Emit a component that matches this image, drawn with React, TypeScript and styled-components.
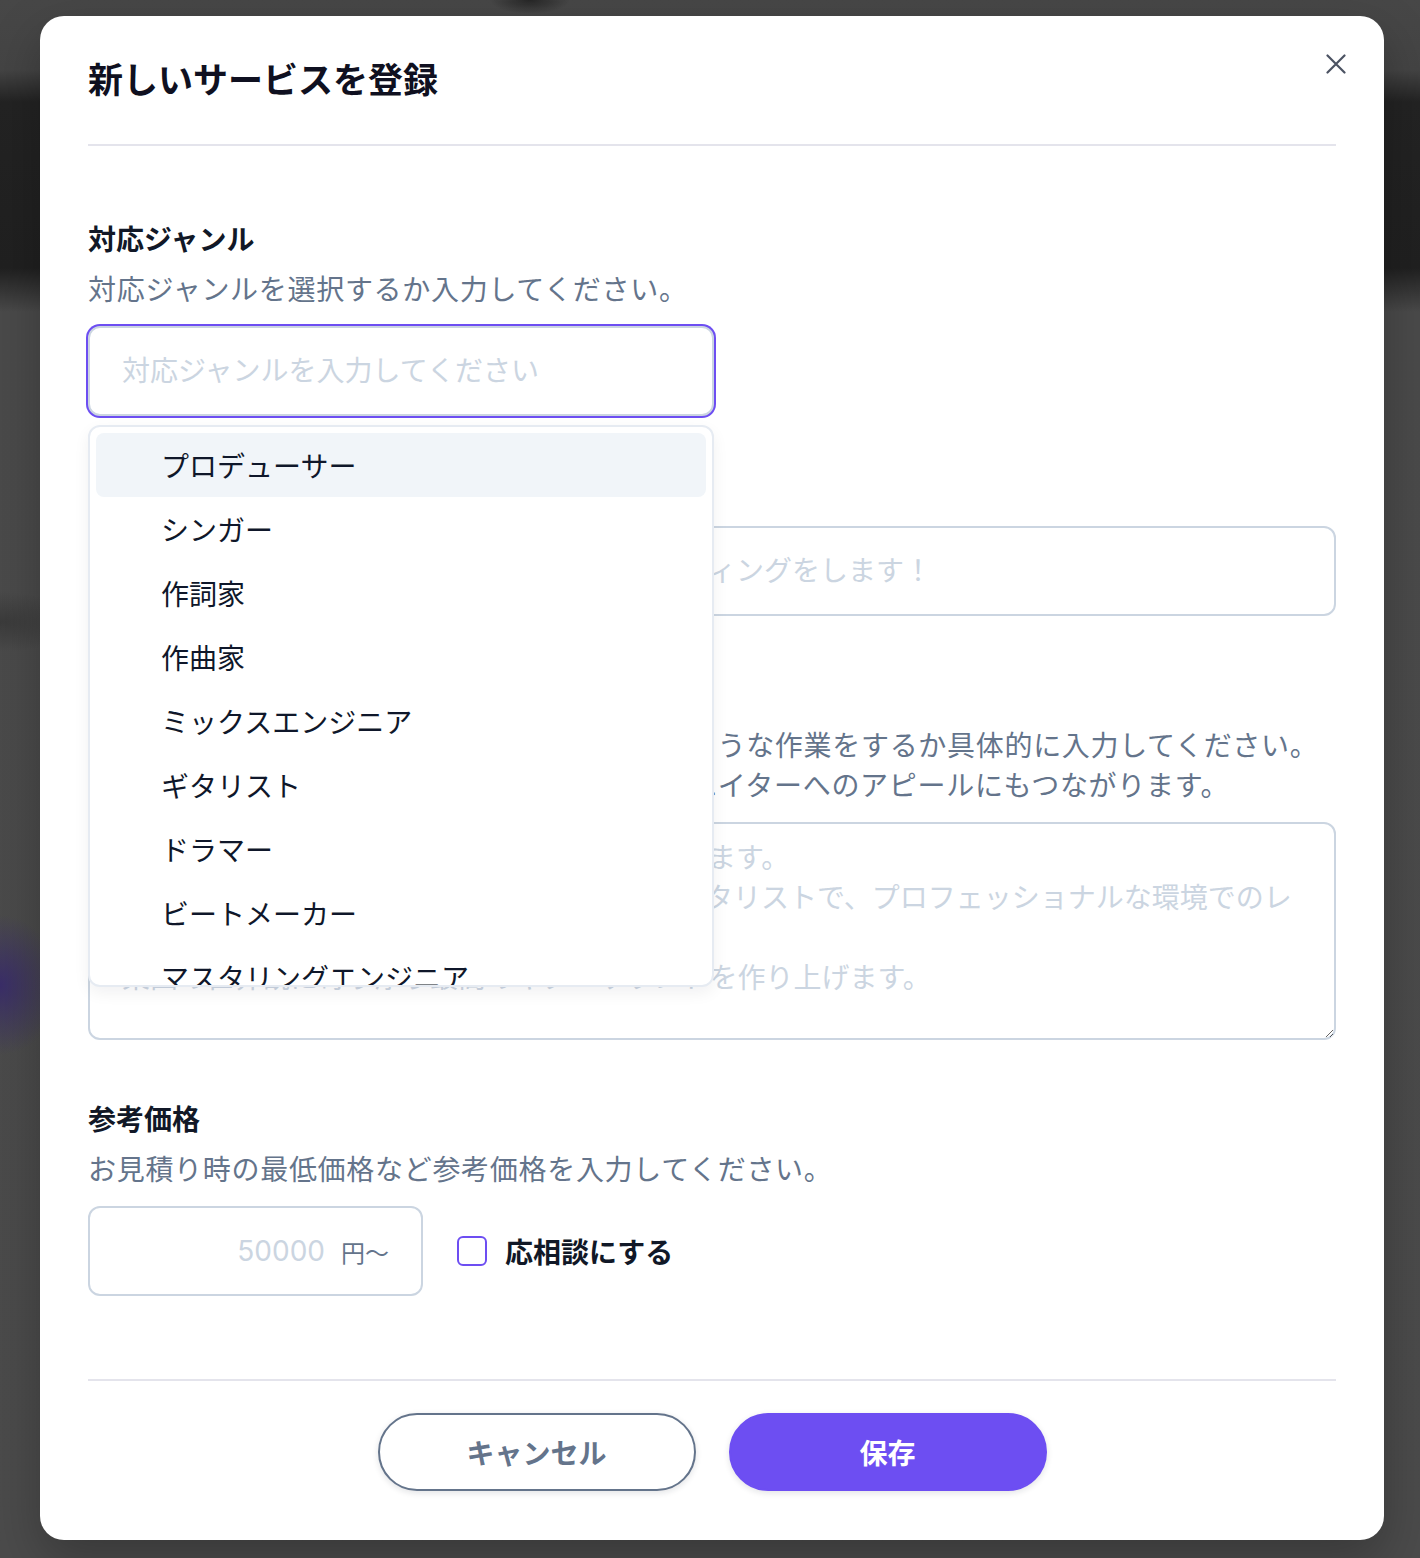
import React from 'react';
import styled, { createGlobalStyle } from 'styled-components';

const fontStack = `Inter, "Noto Sans CJK JP", "Noto Sans", sans-serif`;
const accent = '#6d4ef2';
const slate = '#64748b';
const lineColor = '#cbd5e1';
const ink = '#111827';

const genres = [
  'プロデューサー',
  'シンガー',
  '作詞家',
  '作曲家',
  'ミックスエンジニア',
  'ギタリスト',
  'ドラマー',
  'ビートメーカー',
  'マスタリングエンジニア',
  'ベーシスト',
  'キーボーディスト',
];

const detailPlaceholder =
  'エレキギターのレコーディングと編曲を担当します。\n' +
  '数多くのアーティストの作品に参加してきたギタリストで、プロフェッショナルな環境でのレ\n' +
  'コーディングが可能です。\n' +
  '楽曲の世界観に寄り添う最高のギターサウンドを作り上げます。';

const GlobalStyle = createGlobalStyle`
  * {
    box-sizing: border-box;
  }

  body {
    margin: 0;
    font-family: ${fontStack};
    -webkit-font-smoothing: antialiased;
  }
`;

const Backdrop = styled.div`
  min-height: 1558px;
  padding: 16px 36px 18px 40px;
  background:
    radial-gradient(60px 70px at 0px 985px, rgba(56, 42, 108, 0.9), rgba(56, 42, 108, 0)),
    radial-gradient(80px 30px at 0px 622px, rgba(52, 52, 52, 0.7), rgba(52, 52, 52, 0)),
    radial-gradient(40px 14px at 530px 0px, rgba(30, 30, 30, 0.8), rgba(30, 30, 30, 0)),
    linear-gradient(
      180deg,
      #474747 0px,
      #444444 70px,
      #232323 102px,
      #202020 268px,
      #4a4a4a 312px,
      #4b4b4b 100%
    );
`;

const Modal = styled.div`
  position: relative;
  background: #ffffff;
  border-radius: 24px;
  box-shadow: 0 20px 50px rgba(0, 0, 0, 0.25);
`;

const Header = styled.header`
  height: 128px;
  padding: 0 48px;
  display: flex;
  align-items: center;
`;

const Title = styled.h2`
  margin: 0;
  font-size: 35px;
  font-weight: 700;
  line-height: 1.2;
  color: #0f1020;
`;

const CloseButton = styled.button`
  position: absolute;
  top: 32px;
  right: 32px;
  width: 32px;
  height: 32px;
  padding: 0;
  border: 0;
  background: none;
  display: flex;
  align-items: center;
  justify-content: center;
  color: #4b5262;
  cursor: pointer;
`;

const Rule = styled.hr`
  margin: 0 48px;
  height: 2px;
  border: 0;
  background: #e4e4ec;
`;

const Body = styled.div`
  padding: 74px 48px 83px;
  display: flex;
  flex-direction: column;
  gap: 60px;
`;

const Section = styled.section`
  display: flex;
  flex-direction: column;
`;

const Label = styled.div`
  margin-bottom: 10px;
  font-size: 28px;
  font-weight: 700;
  line-height: 40px;
  color: ${ink};
`;

const Hint = styled.p`
  margin: 0 0 16px;
  font-size: 28px;
  line-height: 40px;
  letter-spacing: 0.025em;
  color: ${slate};
`;

const Field = styled.div<{ $half?: boolean }>`
  position: relative;
  width: ${(p) => (p.$half ? 'calc(50% + 2px)' : '100%')};
`;

const TextInput = styled.input<{ $focused?: boolean }>`
  display: block;
  width: 100%;
  height: 90px;
  padding: 0 32px;
  border: 2px solid ${lineColor};
  border-radius: 12px;
  background: #fff;
  font-family: ${fontStack};
  font-size: 28px;
  color: ${ink};
  caret-color: ${ink};
  outline: none;
  box-shadow: ${(p) => (p.$focused ? `0 0 0 2px ${accent}` : 'none')};

  &::placeholder {
    color: ${lineColor};
  }
`;

const Menu = styled.ul`
  position: absolute;
  top: calc(100% + 9px);
  left: 0;
  right: 0;
  z-index: 10;
  height: 562px;
  margin: 0;
  padding: 6px 6px;
  list-style: none;
  overflow: hidden;
  background: #fff;
  border: 2px solid #e6ebf2;
  border-radius: 12px;
  box-shadow: 0 6px 16px rgba(15, 23, 42, 0.06);
`;

const MenuItem = styled.li<{ $active?: boolean }>`
  height: 64px;
  display: flex;
  align-items: center;
  padding-left: 65px;
  border-radius: 8px;
  font-size: 28px;
  color: #0f172a;
  background: ${(p) => (p.$active ? '#f1f5f9' : 'transparent')};
`;

const TextArea = styled.textarea`
  display: block;
  width: 100%;
  height: 218px;
  padding: 14px 32px;
  border: 2px solid ${lineColor};
  border-radius: 12px;
  font-family: ${fontStack};
  font-size: 28px;
  line-height: 40px;
  color: ${ink};
  resize: vertical;
  outline: none;

  &::placeholder {
    color: ${lineColor};
  }
`;

const PriceRow = styled.div`
  display: flex;
  align-items: center;
  gap: 34px;
`;

const PriceBox = styled.label`
  width: 335px;
  height: 90px;
  display: flex;
  align-items: center;
  padding: 0 32px;
  border: 2px solid ${lineColor};
  border-radius: 12px;
`;

const PriceInput = styled.input`
  flex: 1;
  min-width: 0;
  padding: 0;
  border: 0;
  outline: none;
  text-align: right;
  font-family: ${fontStack};
  font-size: 28px;
  color: ${ink};

  &::placeholder {
    color: ${lineColor};
  }
`;

const Unit = styled.span`
  margin-left: 16px;
  font-size: 24px;
  color: ${slate};
`;

const CheckLabel = styled.label`
  display: flex;
  align-items: center;
  gap: 18px;
  font-size: 28px;
  font-weight: 700;
  color: ${ink};
`;

const Check = styled.input`
  appearance: none;
  margin: 0;
  width: 30px;
  height: 30px;
  border: 2px solid ${accent};
  border-radius: 6px;
  background: #fff;
`;

const Footer = styled.footer`
  display: flex;
  justify-content: center;
  gap: 33px;
  padding: 32px 48px 49px;
`;

const Button = styled.button<{ $primary?: boolean }>`
  width: 318px;
  height: 78px;
  border-radius: 999px;
  border: 2px solid ${(p) => (p.$primary ? accent : slate)};
  background: ${(p) => (p.$primary ? accent : '#fff')};
  color: ${(p) => (p.$primary ? '#fff' : slate)};
  font-family: ${fontStack};
  font-size: 28px;
  font-weight: 700;
  box-shadow: 0 2px 6px rgba(15, 23, 42, 0.12);
  cursor: pointer;
`;

const CloseIcon = (): JSX.Element => (
  <svg width="20" height="20" viewBox="0 0 20 20" fill="none">
    <path d="M1.5 1.5L18.5 18.5M18.5 1.5L1.5 18.5" stroke="currentColor" strokeWidth="2.2" strokeLinecap="round" />
  </svg>
);

export default function App(): JSX.Element {
  return (
    <>
      <GlobalStyle />
      <Backdrop>
        <Modal>
          <Header>
            <Title>新しいサービスを登録</Title>
          </Header>
          <CloseButton aria-label="閉じる">
            <CloseIcon />
          </CloseButton>
          <Rule />
          <Body>
            <Section>
              <Label>対応ジャンル</Label>
              <Hint>対応ジャンルを選択するか入力してください。</Hint>
              <Field $half>
                <TextInput $focused autoFocus placeholder="対応ジャンルを入力してください" />
                <Menu>
                  {genres.map((g, i) => (
                    <MenuItem key={g} $active={i === 0}>
                      {g}
                    </MenuItem>
                  ))}
                </Menu>
              </Field>
            </Section>

            <Section>
              <Label>サービス名</Label>
              <Field>
                <TextInput placeholder="例）自宅スタジオで高品質なボーカルレコーディングをします！" />
              </Field>
            </Section>

            <Section>
              <Label>サービス内容</Label>
              <Hint>
                このサービスでは、クライアントに対してどのような作業をするか具体的に入力してください。
                <br />
                詳しく記載することで依頼を検討しているクリエイターへのアピールにもつながります。
              </Hint>
              <Field>
                <TextArea placeholder={detailPlaceholder} />
              </Field>
            </Section>

            <Section>
              <Label>参考価格</Label>
              <Hint>お見積り時の最低価格など参考価格を入力してください。</Hint>
              <PriceRow>
                <PriceBox>
                  <PriceInput placeholder="50000" />
                  <Unit>円〜</Unit>
                </PriceBox>
                <CheckLabel>
                  <Check type="checkbox" />
                  応相談にする
                </CheckLabel>
              </PriceRow>
            </Section>
          </Body>
          <Rule />
          <Footer>
            <Button>キャンセル</Button>
            <Button $primary>保存</Button>
          </Footer>
        </Modal>
      </Backdrop>
    </>
  );
}
